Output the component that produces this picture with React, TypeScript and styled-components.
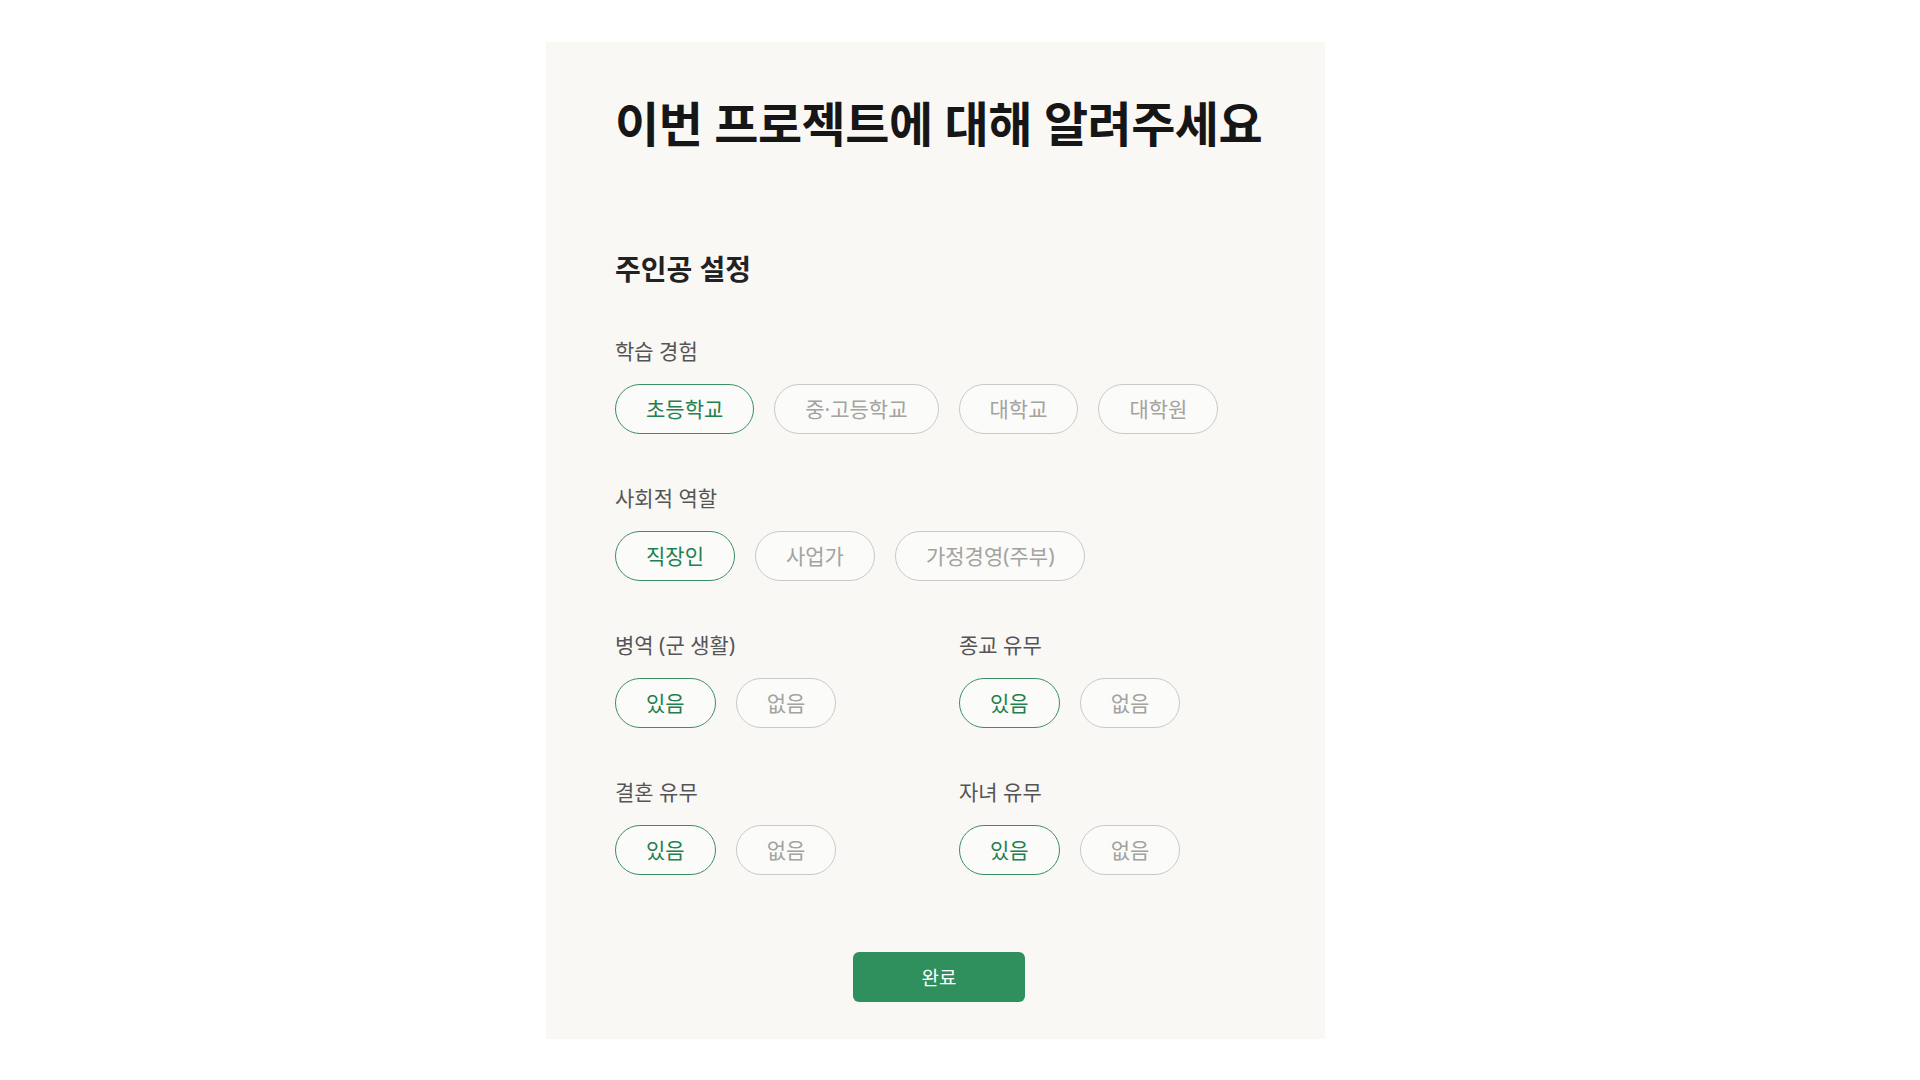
import React, { useState } from "react";
import styled, { createGlobalStyle } from "styled-components";

const GlobalStyle = createGlobalStyle`
  html, body {
    margin: 0;
    padding: 0;
    background: #ffffff;
  }
  body {
    font-family: "Noto Sans", "Noto Sans CJK KR", sans-serif;
    color: #222;
  }
`;

const Page = styled.div`
  width: 1920px;
  min-height: 1080px;
  padding: 42px 0 0 546px;
  box-sizing: border-box;
`;

const Panel = styled.div`
  width: 779px;
  height: 997px;
  box-sizing: border-box;
  background: #f9f8f5;
  padding: 51px 62px 37px 69px;
  display: flex;
  flex-direction: column;
`;

const Title = styled.h1`
  margin: 0;
  font-size: 48px;
  line-height: 62px;
  font-weight: 700;
  color: #161616;
  letter-spacing: -0.5px;
  white-space: nowrap;
`;

const SectionTitle = styled.h2`
  margin: 95px 0 0;
  font-size: 28px;
  line-height: 38px;
  font-weight: 700;
  color: #222;
`;

const Groups = styled.div`
  margin-top: 49px;
  display: grid;
  grid-template-columns: 1fr 1fr;
  column-gap: 40px;
  row-gap: 50px;
`;

const Group = styled.div<{ $wide?: boolean }>`
  grid-column: ${(p) => (p.$wide ? "1 / -1" : "auto")};
  display: flex;
  flex-direction: column;
  gap: 19px;
`;

const Label = styled.div`
  font-size: 21px;
  line-height: 28px;
  color: #555;
`;

const Options = styled.div`
  display: flex;
  gap: 20px;
`;

const Pill = styled.button<{ $active: boolean }>`
  height: 50px;
  padding: 0 30px;
  box-sizing: border-box;
  border-radius: 25px;
  border: 1.5px solid ${(p) => (p.$active ? "#3b8f64" : "#c9c9c6")};
  background: #fbfbf9;
  color: ${(p) => (p.$active ? "#23804f" : "#a3a3a0")};
  font-family: inherit;
  font-size: 21px;
  font-weight: 400;
  line-height: 1;
  display: flex;
  align-items: center;
  justify-content: center;
  cursor: pointer;
  white-space: nowrap;
`;

const Footer = styled.div`
  margin-top: 77px;
  display: flex;
  justify-content: center;
`;

const SubmitButton = styled.button`
  width: 172px;
  height: 50px;
  border: none;
  border-radius: 6px;
  background: #2f905d;
  color: #ffffff;
  font-family: inherit;
  font-size: 19px;
  cursor: pointer;
`;

interface Question {
  key: string;
  label: string;
  options: string[];
  wide?: boolean;
}

const QUESTIONS: Question[] = [
  { key: "edu", label: "학습 경험", options: ["초등학교", "중·고등학교", "대학교", "대학원"], wide: true },
  { key: "role", label: "사회적 역할", options: ["직장인", "사업가", "가정경영(주부)"], wide: true },
  { key: "army", label: "병역 (군 생활)", options: ["있음", "없음"] },
  { key: "religion", label: "종교 유무", options: ["있음", "없음"] },
  { key: "married", label: "결혼 유무", options: ["있음", "없음"] },
  { key: "children", label: "자녀 유무", options: ["있음", "없음"] },
];

export default function App() {
  const [answers, setAnswers] = useState<Record<string, string>>(() =>
    Object.fromEntries(QUESTIONS.map((q) => [q.key, q.options[0]]))
  );

  return (
    <Page>
      <GlobalStyle />
      <Panel>
        <Title>이번 프로젝트에 대해 알려주세요</Title>
        <SectionTitle>주인공 설정</SectionTitle>
        <Groups>
          {QUESTIONS.map((q) => (
            <Group key={q.key} $wide={q.wide}>
              <Label>{q.label}</Label>
              <Options>
                {q.options.map((opt) => (
                  <Pill
                    key={opt}
                    $active={answers[q.key] === opt}
                    onClick={() => setAnswers({ ...answers, [q.key]: opt })}
                  >
                    {opt}
                  </Pill>
                ))}
              </Options>
            </Group>
          ))}
        </Groups>
        <Footer>
          <SubmitButton>완료</SubmitButton>
        </Footer>
      </Panel>
    </Page>
  );
}
